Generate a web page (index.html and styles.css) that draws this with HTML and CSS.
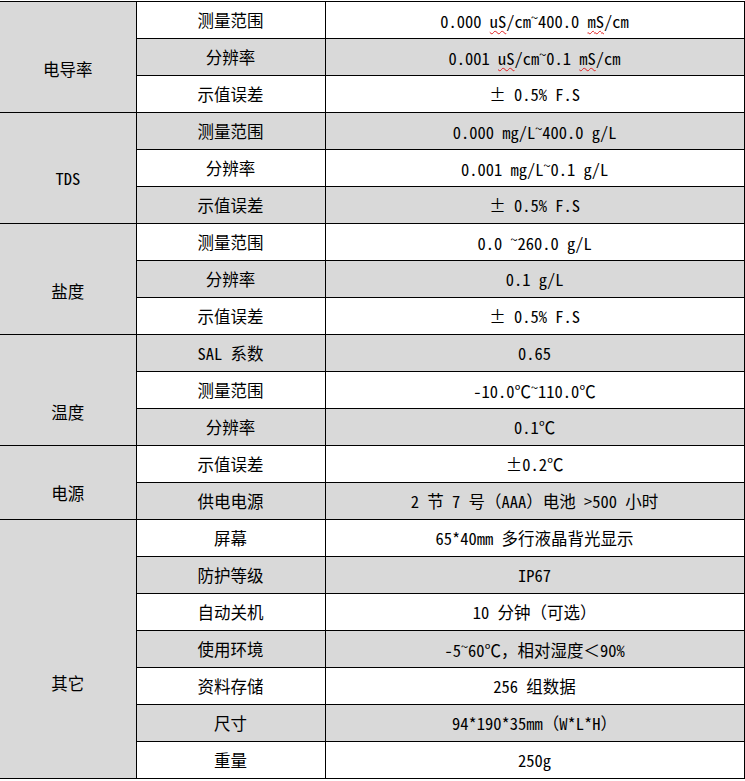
FILE: index.html
```html
<!DOCTYPE html>
<html lang="zh-CN">
<head>
<meta charset="utf-8">
<title>技术参数</title>
<link rel="stylesheet" href="styles.css">
</head>
<body>
<table class="spec">
  <colgroup>
    <col class="c1"><col class="c2"><col class="c3">
  </colgroup>
  <tbody>
    <tr class="w">
      <td class="cat cat-a" rowspan="3">电导率</td>
      <td>测量范围</td>
      <td>0.000 <span class="sp">uS</span>/cm<span class="tl">~</span>400.0 <span class="sp">mS</span>/cm</td>
    </tr>
    <tr class="g"><td>分辨率</td><td>0.001 <span class="sp">uS</span>/cm<span class="tl">~</span>0.1 <span class="sp">mS</span>/cm</td></tr>
    <tr class="w"><td>示值误差</td><td>± 0.5% F.S</td></tr>

    <tr class="g">
      <td class="cat cat-b" rowspan="3">TDS</td>
      <td>测量范围</td><td>0.000 mg/L<span class="tl">~</span>400.0 g/L</td>
    </tr>
    <tr class="w"><td>分辨率</td><td>0.001 mg/L<span class="tl">~</span>0.1 g/L</td></tr>
    <tr class="g"><td>示值误差</td><td>± 0.5% F.S</td></tr>

    <tr class="w">
      <td class="cat cat-c" rowspan="3">盐度</td>
      <td>测量范围</td><td>0.0 <span class="tl">~</span>260.0 g/L</td>
    </tr>
    <tr class="g"><td>分辨率</td><td>0.1 g/L</td></tr>
    <tr class="w"><td>示值误差</td><td>± 0.5% F.S</td></tr>

    <tr class="g">
      <td class="cat cat-d" rowspan="3">温度</td>
      <td>SAL 系数</td><td>0.65</td>
    </tr>
    <tr class="w"><td>测量范围</td><td>-10.0℃<span class="tl">~</span>110.0℃</td></tr>
    <tr class="g"><td>分辨率</td><td>0.1℃</td></tr>

    <tr class="w">
      <td class="cat cat-e" rowspan="2">电源</td>
      <td>示值误差</td><td>±0.2℃</td>
    </tr>
    <tr class="g"><td>供电电源</td><td>2 节 7 号（AAA）电池 &gt;500 小时</td></tr>

    <tr class="w">
      <td class="cat cat-f" rowspan="7">其它</td>
      <td>屏幕</td><td>65*40mm 多行液晶背光显示</td>
    </tr>
    <tr class="g"><td>防护等级</td><td>IP67</td></tr>
    <tr class="w"><td>自动关机</td><td>10 分钟（可选）</td></tr>
    <tr class="g"><td>使用环境</td><td>-5<span class="tl">~</span>60℃，相对湿度＜90%</td></tr>
    <tr class="w"><td>资料存储</td><td>256 组数据</td></tr>
    <tr class="g"><td>尺寸</td><td>94*190*35mm（W*L*H）</td></tr>
    <tr class="w"><td>重量</td><td>250g</td></tr>
  </tbody>
</table>
</body>
</html>
```

FILE: styles.css
```css
html, body {
  margin: 0;
  padding: 0;
  background: #ffffff;
}

body {
  padding-top: 1px;
  font-family: "Noto Sans Mono CJK SC", "Noto Sans CJK SC", sans-serif;
  font-size: 16.5px;
  color: #000;
}

.spec {
  border-collapse: collapse;
  table-layout: fixed;
  width: 744px;
}

.c1 { width: 136px; }
.c2 { width: 189px; }
.c3 { width: 419px; }

.spec td {
  height: 36px;
  padding: 0;
  border: 1px solid #000;
  text-align: center;
  vertical-align: middle;
  line-height: 20px;
  white-space: nowrap;
}

.spec tr > td:first-child {
  border-left: none;
}

.w td { background: #ffffff; }
.g td { background: #d9d9d9; }

.spec td.cat {
  background: #d9d9d9;
}

.cat-a { padding-top: 23px !important; }
.cat-b { padding-top: 20px !important; }
.cat-c { padding-top: 24px !important; }
.cat-d { padding-top: 43px !important; }
.cat-e { padding-top: 20px !important; }
.cat-f { padding-top: 67px !important; }

.sp {
  text-decoration: underline wavy #e02020;
  text-decoration-thickness: 1px;
  text-underline-offset: 3px;
}

.tl {
  display: inline-block;
  line-height: 1;
  vertical-align: 0.35em;
  font-size: 0.85em;
  width: 0.5em;
  overflow: visible;
}
```
